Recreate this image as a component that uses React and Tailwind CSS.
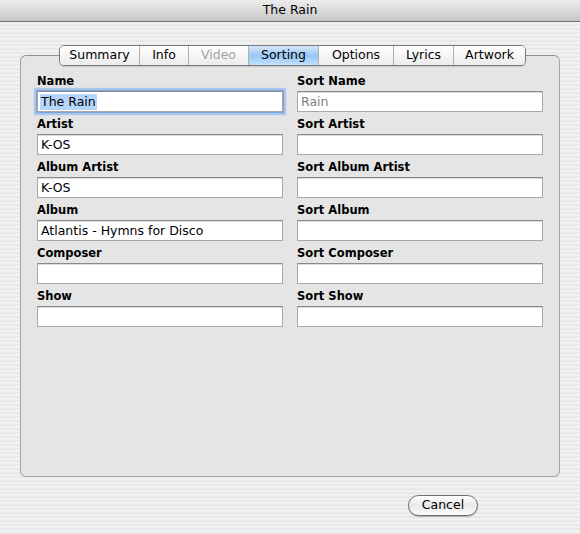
import React from "react";

const tabs = [
  { label: "Summary", w: "w-[79px]" },
  { label: "Info", w: "w-[49px]" },
  { label: "Video", w: "w-[60px]", disabled: true },
  { label: "Sorting", w: "w-[70px]", active: true },
  { label: "Options", w: "w-[75px]" },
  { label: "Lyrics", w: "w-[60px]" },
  { label: "Artwork", w: "w-[72px]" },
];

const rows = [
  { left: "Name", leftValue: "The Rain", right: "Sort Name", rightValue: "Rain", focus: true },
  { left: "Artist", leftValue: "K-OS", right: "Sort Artist" },
  { left: "Album Artist", leftValue: "K-OS", right: "Sort Album Artist" },
  { left: "Album", leftValue: "Atlantis - Hymns for Disco", right: "Sort Album" },
  { left: "Composer", right: "Sort Composer" },
  { left: "Show", right: "Sort Show" },
];

function Field({ label, value, focus, dim }) {
  return (
    <div className="flex flex-col">
      <div className="h-[14px] leading-[15px] text-[11.5px] font-bold text-black">{label}</div>
      <div
        className={
          "mt-[3px] h-[21px] bg-white border border-[#a9a9a9] border-t-[#8a8a8a] flex items-center pl-[2px] text-[12.5px] " +
          (focus ? "shadow-[0_0_0_1px_#7aa3da,0_0_1px_3px_#a9c6ec]" : "shadow-[inset_0_1px_0_#dcdcdc]")
        }
      >
        {value && (
          <span className={(dim ? "text-[#808080] " : "text-black ") + (focus ? "bg-[#b5d5fd] " : "") + "leading-[16px] px-[1px]"}>
            {value}
          </span>
        )}
      </div>
    </div>
  );
}

export default function App() {
  return (
    <div
      className="w-[580px] h-[534px] overflow-hidden flex flex-col text-black"
      style={{ fontFamily: '"DejaVu Sans", "Liberation Sans", sans-serif' }}
    >
      {/* title bar */}
      <div className="h-[22px] shrink-0 flex items-center justify-center bg-gradient-to-b from-[#ededed] via-[#dadada] to-[#c6c6c6] border-b border-[#6f6f6f] text-[12.5px]">
        The Rain
      </div>

      {/* pinstriped window body */}
      <div className="flex-1 flex flex-col px-[20px] pt-[23px] bg-[repeating-linear-gradient(180deg,#f1f1f1_0px,#f1f1f1_2px,#e9e9e9_2px,#e9e9e9_4px)]">
        {/* segmented tab strip */}
        <div className="relative z-10 ml-[39px] flex w-fit h-[21px] rounded-[5px] border border-[#7a7a7a] overflow-hidden shadow-[0_1px_1px_rgba(0,0,0,0.15)]">
          {tabs.map((t, i) => (
            <div
              key={t.label}
              className={
                t.w +
                " flex items-center justify-center text-[12.5px] " +
                (i > 0 ? "border-l border-[#b0b0b0] " : "") +
                (t.active
                  ? "bg-gradient-to-b from-[#d6e8fc] via-[#98c6f4] to-[#c3e0fd] border-t border-t-[#2f4d94] -mt-px "
                  : "bg-gradient-to-b from-white via-[#f6f6f6] to-[#ebebeb] ") +
                (t.disabled ? "text-[#a3a3a3]" : "text-black")
              }
            >
              {t.label}
            </div>
          ))}
        </div>

        {/* tab panel */}
        <div className="-mt-[11px] h-[422px] rounded-[6px] border border-[#a4a4a4] border-t-[#8e8e8e] bg-[#e5e5e5] px-[16px] pt-[18px]">
          <div className="grid grid-cols-2 gap-x-[14px] gap-y-[5px]">
            {rows.map((r) => (
              <React.Fragment key={r.left}>
                <Field label={r.left} value={r.leftValue} focus={r.focus} />
                <Field label={r.right} value={r.rightValue} dim />
              </React.Fragment>
            ))}
          </div>
        </div>

        {/* dialog buttons */}
        <div className="flex justify-end pr-[82px] mt-[18px]">
          <button className="w-[70px] h-[21px] rounded-full border border-[#6b6b6b] bg-gradient-to-b from-white via-[#e9e9e9] to-[#fbfbfb] shadow-[0_1px_1px_rgba(0,0,0,0.25)] text-[12.5px] leading-none text-black">
            Cancel
          </button>
        </div>
      </div>
    </div>
  );
}
